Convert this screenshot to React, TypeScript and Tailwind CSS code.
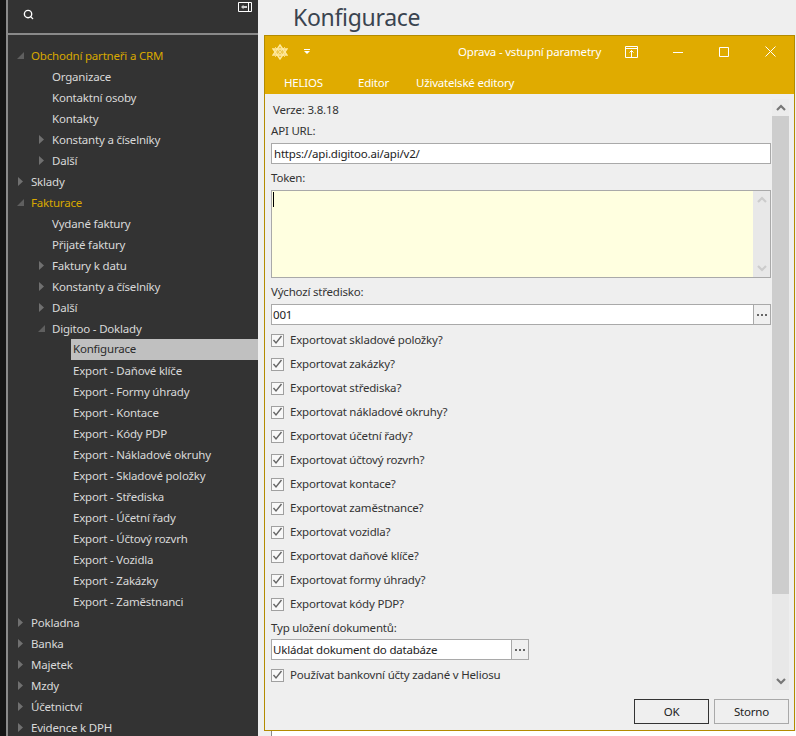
import { Search } from "lucide-react";

type TreeRow = {
  label: string;
  level: 0 | 1 | 2;
  arrow?: "open" | "closed";
  gold?: boolean;
  selected?: boolean;
};

const tree: TreeRow[] = [
  { label: "Obchodní partneři a CRM", level: 0, arrow: "open", gold: true },
  { label: "Organizace", level: 1 },
  { label: "Kontaktní osoby", level: 1 },
  { label: "Kontakty", level: 1 },
  { label: "Konstanty a číselníky", level: 1, arrow: "closed" },
  { label: "Další", level: 1, arrow: "closed" },
  { label: "Sklady", level: 0, arrow: "closed" },
  { label: "Fakturace", level: 0, arrow: "open", gold: true },
  { label: "Vydané faktury", level: 1 },
  { label: "Přijaté faktury", level: 1 },
  { label: "Faktury k datu", level: 1, arrow: "closed" },
  { label: "Konstanty a číselníky", level: 1, arrow: "closed" },
  { label: "Další", level: 1, arrow: "closed" },
  { label: "Digitoo - Doklady", level: 1, arrow: "open" },
  { label: "Konfigurace", level: 2, selected: true },
  { label: "Export - Daňové klíče", level: 2 },
  { label: "Export - Formy úhrady", level: 2 },
  { label: "Export - Kontace", level: 2 },
  { label: "Export - Kódy PDP", level: 2 },
  { label: "Export - Nákladové okruhy", level: 2 },
  { label: "Export - Skladové položky", level: 2 },
  { label: "Export - Střediska", level: 2 },
  { label: "Export - Účetní řady", level: 2 },
  { label: "Export - Účtový rozvrh", level: 2 },
  { label: "Export - Vozidla", level: 2 },
  { label: "Export - Zakázky", level: 2 },
  { label: "Export - Zaměstnanci", level: 2 },
  { label: "Pokladna", level: 0, arrow: "closed" },
  { label: "Banka", level: 0, arrow: "closed" },
  { label: "Majetek", level: 0, arrow: "closed" },
  { label: "Mzdy", level: 0, arrow: "closed" },
  { label: "Účetnictví", level: 0, arrow: "closed" },
  { label: "Evidence k DPH", level: 0, arrow: "closed" },
];

const exportChecks = [
  "Exportovat skladové položky?",
  "Exportovat zakázky?",
  "Exportovat střediska?",
  "Exportovat nákladové okruhy?",
  "Exportovat účetní řady?",
  "Exportovat účtový rozvrh?",
  "Exportovat kontace?",
  "Exportovat zaměstnance?",
  "Exportovat vozidla?",
  "Exportovat daňové klíče?",
  "Exportovat formy úhrady?",
  "Exportovat kódy PDP?",
];

function TreeArrow({ kind }: { kind?: "open" | "closed" }) {
  if (kind === "open") {
    return (
      <svg width="7" height="7" viewBox="0 0 7 7" className="shrink-0">
        <path d="M7 0V7H0Z" fill="#5f5f5f" />
      </svg>
    );
  }
  if (kind === "closed") {
    return (
      <svg width="5" height="9" viewBox="0 0 5 9" className="mx-[1px] shrink-0">
        <path d="M0 0L5 4.5L0 9Z" fill="#707070" />
      </svg>
    );
  }
  return <span className="w-[7px] shrink-0" />;
}

function Row({ row }: { row: TreeRow }) {
  if (row.selected) {
    return (
      <div className="ml-[63px] flex h-[21px] items-center bg-[#c0c0c0] pb-[1px] pl-[2px] text-[#2b2b2b]">
        {row.label}
      </div>
    );
  }
  if (row.level === 2) {
    return <div className="flex h-[21px] items-center pl-[65px] pt-[1px] text-[#d9d9d9]">{row.label}</div>;
  }
  return (
    <div className={row.level === 1 ? "flex h-[21px] items-center pl-[30px]" : "flex h-[21px] items-center pl-[9px]"}>
      <TreeArrow kind={row.arrow} />
      <span className={row.gold ? "ml-[7px] pt-[1px] text-[#d8a800]" : "ml-[7px] pt-[1px] text-[#d9d9d9]"}>
        {row.label}
      </span>
    </div>
  );
}

function Sidebar() {
  return (
    <aside className="flex h-full w-[258px] shrink-0 overflow-hidden bg-[#151515]">
      <div className="ml-[6px] w-[2px] bg-[#8a8a8a]" />
      <div className="flex w-[250px] flex-col bg-[#333333]">
        <div className="relative flex h-[35px] shrink-0 items-center border-b-2 border-[#8a8a8a] pl-[15px]">
          <Search size={11} strokeWidth={3} className="mb-[4px] text-white" />
          <svg width="14" height="10" viewBox="0 0 14 10" className="absolute right-[6px] top-[2px]">
            <path d="M0.5 0.5H13.5V9.5H0.5ZM10.5 0.5V9.5" fill="none" stroke="white" />
            <path d="M3 5L5.5 2.8V4H9V6H5.5V7.2Z" fill="#d0d0d0" />
          </svg>
        </div>
        <div className="pt-[10px] text-[11.5px] tracking-[-0.2px]">
          {tree.map((row, i) => (
            <Row key={i} row={row} />
          ))}
        </div>
      </div>
    </aside>
  );
}

function Checkbox({ label }: { label: string }) {
  return (
    <div className="flex h-[24px] items-center pl-[6px]">
      <span className="flex h-[13px] w-[13px] items-center justify-center border border-[#a0a0a0] bg-[#f8f8f8]">
        <svg width="11" height="10" viewBox="0 0 11 10" fill="none" stroke="#666666" strokeWidth="1.4">
          <path d="M1.5 5L4 8L9.5 1" />
        </svg>
      </span>
      <span className="ml-[6px]">{label}</span>
    </div>
  );
}

function TitleIcon() {
  return (
    <svg width="16" height="16" viewBox="0 0 16 16" fill="#ffe9a0" fillOpacity="0.3" stroke="#ffe9a0" strokeWidth="1.4">
      <path d="M1 5L15 5L8 15Z" />
      <path d="M1 11L15 11L8 1Z" />
      <path d="M3 3L13 13M13 3L3 13" strokeWidth="0.8" />
    </svg>
  );
}

function Chevron({ dir, color }: { dir: "up" | "down"; color: string }) {
  return (
    <svg width="10" height="7" viewBox="0 0 10 7" fill="none" stroke={color} strokeWidth="2.2">
      <path d={dir === "up" ? "M1 6L5 2L9 6" : "M1 1L5 5L9 1"} />
    </svg>
  );
}

function LookupInput({ value, width }: { value: string; width: string }) {
  return (
    <div className={`ml-[6px] flex h-[21px] ${width} border border-[#a9a9a9] bg-white`}>
      <div className="flex flex-1 items-center pl-[1px] text-[#222222]">{value}</div>
      <div className="flex w-[17px] items-center justify-center border-l border-[#a9a9a9] bg-[#f0f0f0]">
        <div className="flex gap-[2px]">
          <span className="h-[2px] w-[2px] bg-[#666666]" />
          <span className="h-[2px] w-[2px] bg-[#666666]" />
          <span className="h-[2px] w-[2px] bg-[#666666]" />
        </div>
      </div>
    </div>
  );
}

function Dialog() {
  return (
    <div className="ml-[6px] flex h-[696px] w-[531px] flex-col border border-[#b38b00] bg-[#efefef] text-[11.5px] tracking-[-0.2px] text-[#333333]">
      <div className="flex h-[58px] shrink-0 flex-col bg-[#e0ab00] text-white">
        <div className="flex h-[31px] items-center">
          <div className="ml-[7px]">
            <TitleIcon />
          </div>
          <svg width="6" height="5" viewBox="0 0 6 5" className="mb-[1px] ml-[16px]">
            <path d="M0 0H6V1H0ZM0 2H6L3 5Z" fill="white" />
          </svg>
          <span className="ml-[148px] w-[167px] pt-[1px]">Oprava - vstupní parametry</span>
          <svg width="13" height="12" viewBox="0 0 13 12" fill="none" stroke="white">
            <path d="M0.5 0.5H12.5V11.5H0.5ZM0.5 2.5H12.5M6.5 11V4.5M4.5 6.5L6.5 4.5L8.5 6.5" />
          </svg>
          <svg width="10" height="1" viewBox="0 0 10 1" className="ml-[35px] mt-[2px]">
            <path d="M0 0H10V1H0Z" fill="white" />
          </svg>
          <svg width="10" height="10" viewBox="0 0 10 10" fill="none" stroke="white" className="ml-[36px]">
            <path d="M0.5 0.5H9.5V9.5H0.5Z" />
          </svg>
          <svg width="11" height="11" viewBox="0 0 11 11" fill="none" stroke="white" className="ml-[36px]">
            <path d="M0.5 0.5L10.5 10.5M10.5 0.5L0.5 10.5" />
          </svg>
        </div>
        <div className="flex h-[27px] items-center pt-[5px]">
          <span className="ml-[19px]">HELIOS</span>
          <span className="ml-[35px]">Editor</span>
          <span className="ml-[27px]">Uživatelské editory</span>
        </div>
      </div>

      <div className="flex flex-1 overflow-hidden">
        <div className="flex w-[507px] flex-col">
          <div className="ml-[8px] mt-[7px] h-[18px] leading-[18px]">Verze: 3.8.18</div>
          <div className="ml-[6px] mt-[3px] h-[21px] leading-[17px]">API URL:</div>
          <div className="ml-[6px] flex h-[21px] w-[500px] items-center border border-[#a9a9a9] bg-white pl-[2px] text-[#222222]">
            https://api.digitoo.ai/api/v2/
          </div>
          <div className="ml-[6px] mt-[3px] h-[23px] leading-[21px]">Token:</div>
          <div className="ml-[6px] flex h-[88px] w-[500px] border border-[#a9a9a9] bg-[#ffffe0]">
            <div className="ml-[1px] mt-[1px] h-[15px] w-[1px] bg-black" />
            <div className="ml-auto flex w-[17px] flex-col items-center justify-between bg-[#e8e8e8] py-[5px]">
              <Chevron dir="up" color="#cccccc" />
              <Chevron dir="down" color="#cccccc" />
            </div>
          </div>
          <div className="ml-[6px] mt-[3px] h-[23px] leading-[21px]">Výchozí středisko:</div>
          <LookupInput value="001" width="w-[500px]" />
          <div className="mt-[3px]">
            {exportChecks.map((label) => (
              <Checkbox key={label} label={label} />
            ))}
          </div>
          <div className="ml-[6px] mt-[1px] h-[22px] leading-[22px]">Typ uložení dokumentů:</div>
          <LookupInput value="Ukládat dokument do databáze" width="w-[258px]" />
          <div className="mt-[3px]">
            <Checkbox label="Používat bankovní účty zadané v Heliosu" />
          </div>
        </div>
        <div className="mt-[5px] flex h-[591px] w-[17px] flex-col bg-[#e8e8e8]">
          <div className="flex h-[17px] items-center justify-center bg-[#ececec]">
            <Chevron dir="up" color="#777777" />
          </div>
          <div className="h-[478px] bg-[#cdcdcd]" />
          <div className="mt-auto flex h-[17px] items-center justify-center">
            <Chevron dir="down" color="#777777" />
          </div>
        </div>
      </div>

      <div className="flex h-[31px] shrink-0 justify-end gap-[5px] pb-[5px] pr-[5px]">
        <button className="h-[25px] w-[75px] border border-[#333333] text-[#222222]">OK</button>
        <button className="h-[25px] w-[75px] border border-[#a9a9a9] text-[#222222]">Storno</button>
      </div>
    </div>
  );
}

export default function App() {
  return (
    <div className="flex h-[736px] w-[796px] overflow-hidden bg-[#efefef] font-['Noto_Sans','Open_Sans',sans-serif]">
      <Sidebar />
      <main className="flex-1">
        <h1 className="ml-[35px] h-[35px] text-[23px] leading-[34px] tracking-[-0.3px] text-[#3a4450]">Konfigurace</h1>
        <Dialog />
        <div className="ml-[13px] h-[5px] border-l border-[#8a8a8a] bg-white" />
      </main>
    </div>
  );
}
